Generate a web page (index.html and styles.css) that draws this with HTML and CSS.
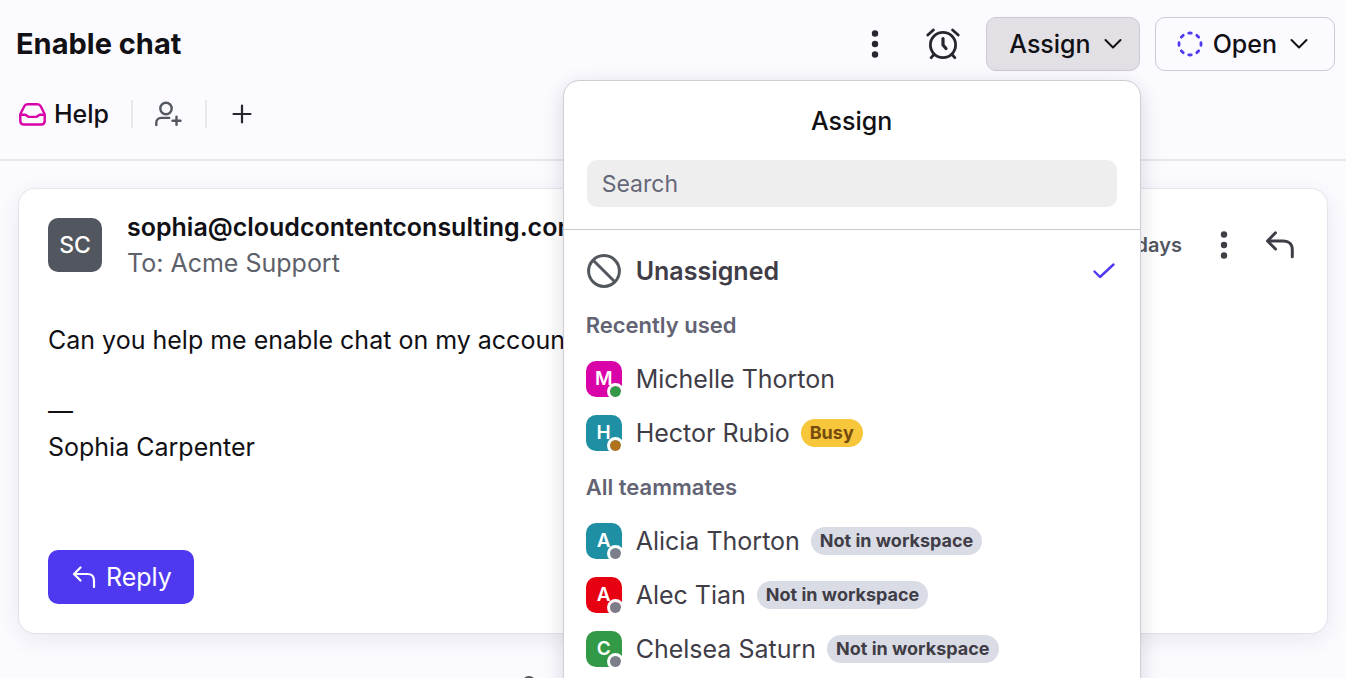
FILE: index.html
```html
<!DOCTYPE html>
<html lang="en">
<head>
<meta charset="utf-8">
<meta name="viewport" content="width=device-width, initial-scale=1">
<title>Enable chat</title>
<link rel="stylesheet" href="styles.css">
</head>
<body>
<header class="topbar">
  <div class="topbar-row">
    <h1 class="title">Enable chat</h1>
    <div class="actions">
      <button class="icon-btn" type="button" aria-label="More actions">
        <svg width="8" height="28" viewBox="0 0 8 28" fill="currentColor"><circle cx="4" cy="3.5" r="3.2"/><circle cx="4" cy="14" r="3.2"/><circle cx="4" cy="24.5" r="3.2"/></svg>
      </button>
      <button class="icon-btn icon-btn-wide" type="button" aria-label="Snooze">
        <svg width="34" height="32" viewBox="0 0 34 32" fill="none" stroke="currentColor" stroke-width="2.8" stroke-linecap="round" stroke-linejoin="round"><circle cx="17" cy="17" r="12.6"/><path d="M17 10.5V17l3 3.6" stroke-width="3.2"/><path d="M1.8 7 7.4 2M32.2 7l-5.600-5M8 26.500l-2.800 3.200M26 26.500l2.800 3.200"/></svg>
      </button>
      <div class="assign">
        <button class="btn btn-active" type="button" aria-expanded="true">
          <span>Assign</span>
          <svg width="18" height="12" viewBox="0 0 18 12" class="chevron"><path d="m1.5 2 7.5 7.5L16.5 2"/></svg>
        </button>
        <section class="popover" aria-label="Assign">
          <div class="popover-head">
            <h2 class="popover-title">Assign</h2>
            <input class="search" type="text" placeholder="Search" aria-label="Search">
          </div>
          <div class="options">
            <button class="option option-selected" type="button">
              <svg class="none-icon" width="36" height="36" viewBox="0 0 36 36"><circle cx="18" cy="18" r="15.4"/><path d="m7.200 7.200 21.600 21.600"/></svg>
              <span class="option-name">Unassigned</span>
              <svg class="check" width="22" height="16" viewBox="0 0 22 16"><path d="m1.500 8.500 5.500 5.500L20.500 1.500"/></svg>
            </button>
            <h3 class="group">Recently used</h3>
            <button class="option" type="button">
              <span class="avatar magenta">M<i class="status online"></i></span>
              <span class="option-name">Michelle Thorton</span>
            </button>
            <button class="option" type="button">
              <span class="avatar teal">H<i class="status away"></i></span>
              <span class="option-name">Hector Rubio</span>
              <span class="tag tag-busy">Busy</span>
            </button>
            <h3 class="group">All teammates</h3>
            <button class="option" type="button">
              <span class="avatar teal">A<i class="status"></i></span>
              <span class="option-name">Alicia Thorton</span>
              <span class="tag">Not in workspace</span>
            </button>
            <button class="option" type="button">
              <span class="avatar red">A<i class="status"></i></span>
              <span class="option-name">Alec Tian</span>
              <span class="tag">Not in workspace</span>
            </button>
            <button class="option" type="button">
              <span class="avatar green">C<i class="status"></i></span>
              <span class="option-name">Chelsea Saturn</span>
              <span class="tag">Not in workspace</span>
            </button>
          </div>
        </section>
      </div>
      <button class="btn btn-open" type="button">
        <svg width="26" height="26" viewBox="0 0 26 26" class="open-icon"><circle cx="13" cy="13" r="11" pathLength="80"/></svg>
        <span>Open</span>
        <svg width="18" height="12" viewBox="0 0 18 12" class="chevron"><path d="m1.5 2 7.5 7.5L16.5 2"/></svg>
      </button>
    </div>
  </div>
  <div class="meta">
    <button class="inbox" type="button">
      <svg width="28" height="24" viewBox="0 0 28 24" fill="none" stroke="currentColor" stroke-width="2.4" stroke-linejoin="round" stroke-linecap="round"><path d="M2.300 13.500c0-1 .2-1.800.7-2.700l3.300-6.600C7 2.800 8 2.300 9.500 2.300h10c1.500 0 2.500.5 3.200 1.900l3.300 6.600c.5.9.7 1.700.7 2.700V19c0 2.200-1.300 3.500-3.500 3.500H5.800c-2.200 0-3.500-1.300-3.500-3.500z"/><path d="M2.500 12.700h4.300c1.200 0 1.500.4 2.100 1 .7.800 1.300 1.200 2.400 1.200h6.400c1.100 0 1.700-.4 2.400-1.200.6-.6.9-1 2.100-1h4.300"/></svg>
      <span>Help</span>
    </button>
    <button class="meta-btn" type="button" aria-label="Add participant">
      <svg width="28" height="26" viewBox="0 0 28 26" fill="none" stroke="currentColor" stroke-width="2.4" stroke-linecap="round"><circle cx="12" cy="7.500" r="5.700"/><path d="M2.300 24v-2.200c0-3 1.900-4.900 4.900-4.900h8"/><path d="M22.500 15.800v8M18.500 19.800h8"/></svg>
    </button>
    <button class="meta-btn meta-add" type="button" aria-label="Add tag">
      <svg width="20" height="20" viewBox="0 0 20 20" fill="none" stroke="currentColor" stroke-width="2.2" stroke-linecap="round"><path d="M10 1.500v17M1.500 10h17"/></svg>
    </button>
  </div>
</header>
<main class="thread">
  <article class="message">
    <div class="message-head">
      <span class="sender-avatar">SC</span>
      <div class="sender">
        <div class="sender-email">sophia@cloudcontentconsulting.com</div>
        <div class="sender-to">To: Acme Support</div>
      </div>
      <span class="age">days</span>
      <button class="icon-btn message-more" type="button" aria-label="Message options">
        <svg width="8" height="28" viewBox="0 0 8 28" fill="currentColor"><circle cx="4" cy="3.5" r="3.2"/><circle cx="4" cy="14" r="3.2"/><circle cx="4" cy="24.5" r="3.2"/></svg>
      </button>
      <button class="icon-btn message-reply" type="button" aria-label="Reply to message">
        <svg width="30" height="28" viewBox="0 0 30 28" fill="none" stroke="currentColor" stroke-width="3" stroke-linecap="round" stroke-linejoin="round"><path d="M10.500 1.800 2.500 10l8 8M3 10h15.500c5.500 0 8.800 3.200 8.800 8.800v7"/></svg>
      </button>
    </div>
    <div class="message-body">
      <p>Can you help me enable chat on my account?</p>
      <p class="signature">—<br>Sophia Carpenter</p>
    </div>
    <button class="reply" type="button">
      <svg width="24" height="22" viewBox="0 0 24 22" fill="none" stroke="currentColor" stroke-width="2.2" stroke-linecap="round" stroke-linejoin="round"><path d="M8.500 1.500 2 8l6.500 6.500M2.500 8h13c4.500 0 6.500 2.500 6.500 6.500V21"/></svg>
      <span>Reply</span>
    </button>
  </article>
  <div class="event">
    <svg width="28" height="28" viewBox="0 0 28 28" fill="none" stroke="currentColor" stroke-width="2.4"><circle cx="14" cy="7" r="5.800"/><path d="M4 26c0-6 4-9 10-9s10 3 10 9"/></svg>
  </div>
</main>
</body>
</html>
```

FILE: styles.css
```css
* {
  box-sizing: border-box;
}

body {
  margin: 0;
  height: 100vh;
  overflow: hidden;
  background: #fbfaff;
  color: #111015;
  font-family: Inter, "Liberation Sans", sans-serif;
  font-size: 25px;
  line-height: 36px;
}

h1, h2, h3, p {
  margin: 0;
}

button {
  margin: 0;
  padding: 0;
  border: 0;
  background: none;
  color: inherit;
  font: inherit;
  cursor: pointer;
}

svg {
  display: block;
  flex: none;
}

/* Conversation header */
.topbar {
  padding: 17px 11px 31px 16px;
  border-bottom: 2px solid #e8e7ec;
}

.topbar-row,
.actions,
.meta {
  display: flex;
  align-items: center;
}

.topbar-row {
  justify-content: space-between;
}

.title {
  font-size: 29px;
  font-weight: 700;
}

.actions {
  gap: 15px;
}

.icon-btn {
  display: flex;
  align-items: center;
  justify-content: center;
  color: #29252f;
}

.icon-btn-wide {
  margin: 0 11px 0 32px;
}

.btn {
  display: flex;
  align-items: center;
  height: 54px;
  gap: 13px;
  padding: 0 17px 0 22px;
  border: 1px solid #ccc9d1;
  border-radius: 10px;
  font-weight: 500;
}

.btn-active {
  background: #e2e0e5;
}

.btn-open {
  padding: 0 26px 0 21px;
}

.btn-open span {
  margin-left: -3px;
}

.chevron {
  fill: none;
  stroke: #111015;
  stroke-width: 2;
  stroke-linecap: round;
  stroke-linejoin: round;
}

.open-icon {
  fill: none;
  stroke: #4f39f0;
  stroke-width: 2.8;
  stroke-linecap: round;
  stroke-dasharray: 3 7;
  stroke-dashoffset: 1.5;
}

.meta {
  height: 28px;
  margin-top: 29px;
}

.inbox {
  display: flex;
  align-items: center;
  gap: 8px;
  padding: 0 22px 0 2px;
  font-weight: 500;
}

.inbox svg {
  color: #d902a8;
}

.meta-btn {
  height: 28px;
  padding: 0 23px 0 21px;
  border-left: 2px solid #e8e7ec;
  color: #53575f;
}

.meta-add {
  padding: 0 25px;
  color: #29252f;
}

/* Assign menu */
.assign {
  position: relative;
}

.popover {
  position: absolute;
  z-index: 2;
  top: calc(100% + 9px);
  right: -1px;
  width: 578px;
  padding-bottom: 48px;
  border: 1px solid #cfced4;
  border-radius: 16px;
  background: #fff;
  box-shadow: 0 6px 22px rgba(20, 15, 40, 0.14);
}

.popover-head {
  padding: 22px 23px;
  border-bottom: 1px solid #cbcbcf;
}

.popover-title {
  margin-bottom: 21px;
  font-size: 25px;
  font-weight: 500;
  text-align: center;
}

.search {
  display: block;
  width: 100%;
  height: 47px;
  padding: 0 15px;
  border: 0;
  border-radius: 10px;
  background: #eee;
  color: #111015;
  font: inherit;
  font-size: 23px;
}

.search::placeholder {
  color: #656779;
  opacity: 1;
}

.options {
  padding: 14px 22px 0;
}

.option {
  display: flex;
  align-items: center;
  width: 100%;
  height: 54px;
  color: #403d47;
  text-align: left;
}

.option-name {
  margin-left: 14px;
}

.option-selected {
  font-weight: 600;
}

.none-icon {
  fill: none;
  stroke: #53585f;
  stroke-width: 3;
}

.check {
  margin: 0 3px 0 auto;
  fill: none;
  stroke: #4f39f0;
  stroke-width: 2.4;
  stroke-linecap: round;
  stroke-linejoin: round;
}

.group {
  color: #626373;
  font-size: 22px;
  font-weight: 600;
  line-height: 54px;
}

.avatar {
  position: relative;
  width: 36px;
  height: 36px;
  border-radius: 10px;
  color: #fff;
  font-size: 19px;
  font-weight: 600;
  text-align: center;
}

.magenta {
  background: #d902a8;
}

.teal {
  background: #1f8fa3;
}

.red {
  background: #e60012;
}

.green {
  background: #329a46;
}

.status {
  position: absolute;
  right: -2px;
  bottom: -3px;
  width: 17px;
  height: 17px;
  border: 3px solid #fff;
  border-radius: 50%;
  background: #7c7e8b;
  background-clip: padding-box;
}

.online {
  background-color: #329a46;
}

.away {
  background-color: #b0721b;
}

.tag {
  margin-left: 11px;
  padding: 0 9px;
  border-radius: 14px;
  background: #dadce5;
  font-size: 18px;
  font-weight: 700;
  line-height: 28px;
}

.tag-busy {
  background: #f8c63a;
  color: #754b10;
}

/* Thread */
.message {
  margin: 28px 19px 0;
  padding: 20px 29px 29px;
  border-radius: 16px;
  background: #fff;
  box-shadow: 0 0 1px 1px rgba(40, 30, 60, 0.07), 0 6px 24px rgba(40, 30, 60, 0.08);
}

.message-head {
  display: flex;
  align-items: center;
}

.sender-avatar {
  width: 54px;
  border-radius: 10px;
  background: #52565e;
  color: #fff;
  font-size: 23px;
  font-weight: 500;
  line-height: 54px;
  text-align: center;
}

.sender {
  flex: 1;
  margin-left: 25px;
}

.sender-email {
  font-weight: 600;
}

.sender-to {
  color: #5d616b;
}

.age {
  color: #53575f;
  font-size: 20px;
  font-weight: 600;
}

.message-more,
.message-reply {
  color: #403d47;
}

.message-more {
  margin: 0 37px 0 38px;
}

.message-reply {
  margin-right: 3px;
}

.message-body {
  margin: 41px 0 85px;
}

.signature {
  margin-top: 35px;
}

.reply {
  display: flex;
  align-items: center;
  height: 54px;
  gap: 10px;
  padding: 0 22px 0 24px;
  border-radius: 10px;
  background: #4f39f0;
  color: #fff;
}

.event {
  display: flex;
  justify-content: center;
  margin: 43px 289px 0 0;
  color: #53575f;
}
```
